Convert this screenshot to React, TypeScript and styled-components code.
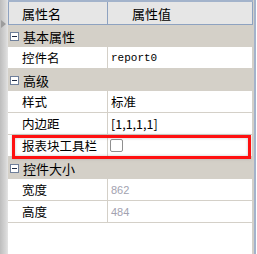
import React from 'react';
import styled, { createGlobalStyle } from 'styled-components';

const GlobalStyle = createGlobalStyle`
  html, body {
    margin: 0;
    padding: 0;
    background: #ffffff;
    overflow: hidden;
  }
`;

type Prop = {
  name: string;
  value?: string;
  kind?: 'mono' | 'text' | 'dim' | 'check';
  marked?: boolean;
};

type Group = {
  title: string;
  props: Prop[];
};

const GROUPS: Group[] = [
  {
    title: '基本属性',
    props: [{ name: '控件名', value: 'report0', kind: 'mono' }],
  },
  {
    title: '高级',
    props: [
      { name: '样式', value: '标准', kind: 'text' },
      { name: '内边距', value: '[1,1,1,1]', kind: 'text' },
      { name: '报表块工具栏', kind: 'check', marked: true },
    ],
  },
  {
    title: '控件大小',
    props: [
      { name: '宽度', value: '862', kind: 'dim' },
      { name: '高度', value: '484', kind: 'dim' },
    ],
  },
];

const App = () => {
  return (
    <>
      <GlobalStyle />
      <Frame>
        <LeftStrip>
          <StripArrow />
        </LeftStrip>
        <Grid>
          <Header>
            <HeaderCell $first>属性名</HeaderCell>
            <HeaderCell>属性值</HeaderCell>
          </Header>
          {GROUPS.map(group => (
            <React.Fragment key={group.title}>
              <CategoryRow>
                <Collapse />
                <CategoryTitle>{group.title}</CategoryTitle>
              </CategoryRow>
              {group.props.map(prop => (
                <PropRow key={prop.name}>
                  <NameCell>{prop.name}</NameCell>
                  <ValueCell $kind={prop.kind}>
                    {prop.kind === 'check' ? <CheckBox /> : prop.value}
                  </ValueCell>
                  {prop.marked && <Highlight />}
                </PropRow>
              ))}
            </React.Fragment>
          ))}
          <Blank />
        </Grid>
        <RightEdge />
      </Frame>
    </>
  );
};

const Frame = styled.div`
  display: flex;
  width: 257px;
  height: 254px;
  font-family: 'Noto Sans CJK SC', 'Liberation Sans', sans-serif;
  font-size: 12.5px;
  color: #000000;
`;

const LeftStrip = styled.div`
  position: relative;
  width: 8px;
  flex-shrink: 0;
  background: linear-gradient(to right, #bdbdbd, #d6d6d6 70%, #e4e4e4);
`;

const StripArrow = styled.div`
  position: absolute;
  left: 1px;
  top: 20px;
  width: 0;
  height: 0;
  border-top: 4px solid transparent;
  border-bottom: 4px solid transparent;
  border-left: 5px solid #9c9c9c;
`;

const Grid = styled.div`
  display: flex;
  flex-direction: column;
  width: 245px;
  flex-shrink: 0;
  border-top: 2px solid #a3b3cb;
  background: #d4d0c8;
`;

const Header = styled.div`
  display: flex;
  height: 22px;
  background: #e6e6e6;
  border-bottom: 1px solid #8ea2c0;
  border-right: 1px solid #8ea2c0;
  border-left: 1px solid #8ea2c0;
  box-sizing: content-box;
`;

const HeaderCell = styled.div<{ $first?: boolean }>`
  display: flex;
  align-items: center;
  box-sizing: border-box;
  width: ${p => (p.$first ? '99px' : 'auto')};
  flex: ${p => (p.$first ? '0 0 99px' : '1')};
  padding-left: ${p => (p.$first ? '13px' : '24px')};
  border-right: ${p => (p.$first ? '1px solid #8ea2c0' : 'none')};
  font-size: 13px;
`;

const CategoryRow = styled.div`
  display: flex;
  align-items: center;
  height: 22px;
  background: #d4d0c8;
`;

const Collapse = styled.div`
  position: relative;
  width: 7px;
  height: 7px;
  margin-left: 2px;
  border: 1px solid #6f7f9a;
  background: #ffffff;

  &::after {
    content: '';
    position: absolute;
    left: 1px;
    top: 3px;
    width: 5px;
    height: 1px;
    background: #1e2a44;
  }
`;

const CategoryTitle = styled.span`
  margin-left: 4px;
  font-size: 13px;
`;

const PropRow = styled.div`
  position: relative;
  display: flex;
  height: 22px;
  margin-right: 1px;
  box-sizing: border-box;
  background: #ffffff;
  border-bottom: 1px solid #d4d0c8;
`;

const NameCell = styled.div`
  display: flex;
  align-items: center;
  flex: 0 0 100px;
  box-sizing: border-box;
  padding-left: 14px;
  border-right: 1px solid #d4d0c8;
`;

const ValueCell = styled.div<{ $kind?: Prop['kind'] }>`
  display: flex;
  align-items: center;
  flex: 1;
  padding-left: ${p => (p.$kind === 'check' ? '2px' : '3px')};
  font-family: ${p =>
    p.$kind === 'mono'
      ? "'Liberation Mono', monospace"
      : p.$kind === 'dim'
      ? "'Liberation Sans', sans-serif"
      : "'Noto Sans CJK SC', 'Liberation Sans', sans-serif"};
  font-size: ${p => (p.$kind === 'mono' || p.$kind === 'dim' ? '11px' : '12.5px')};
  color: ${p => (p.$kind === 'dim' ? '#a2a2b0' : '#000000')};
`;

const CheckBox = styled.div`
  width: 11px;
  height: 11px;
  border: 1px solid #8f8f8f;
  border-radius: 2px;
  background: #ffffff;
`;

const Highlight = styled.div`
  position: absolute;
  left: 4px;
  top: 0;
  right: 1px;
  height: 24px;
  box-sizing: border-box;
  border: 3px solid #ff1010;
  box-shadow: inset 0 0 3px rgba(120, 120, 120, 0.45), 0 0 3px rgba(120, 120, 120, 0.35);
  pointer-events: none;
`;

const Blank = styled.div`
  flex: 1;
  background: #ffffff;
  margin-right: 1px;
`;

const RightEdge = styled.div`
  width: 4px;
  flex-shrink: 0;
  background: linear-gradient(to right, #d4d0c8 0 1px, #a3b3cb 1px 3px, #ffffff 3px);
`;

export default App;
